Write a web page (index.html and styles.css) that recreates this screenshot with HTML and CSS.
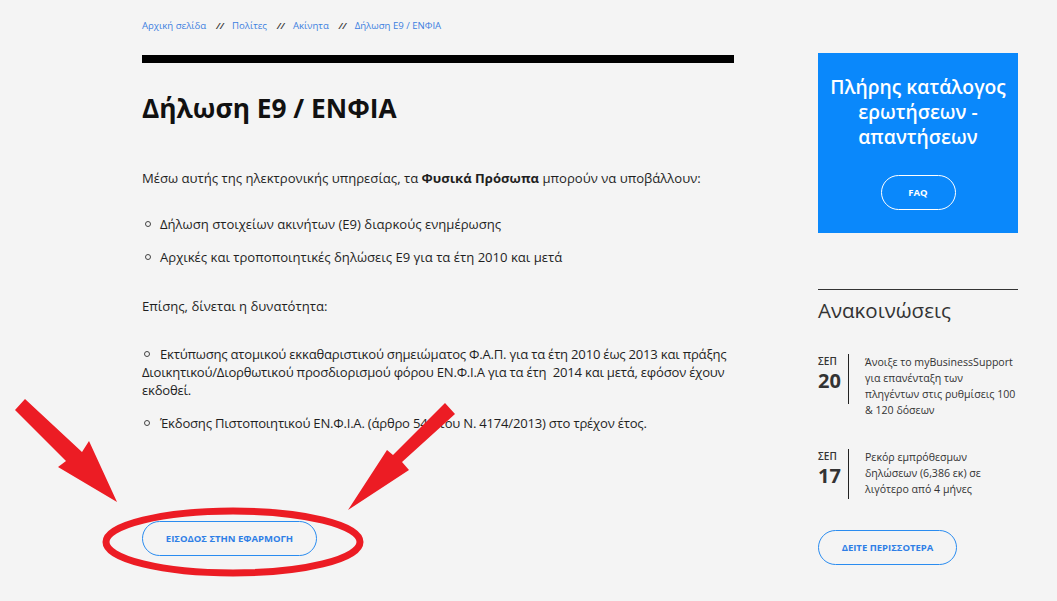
FILE: index.html
```html
<!DOCTYPE html>
<html lang="el">
<head>
<meta charset="UTF-8">
<title>Δήλωση Ε9 / ΕΝΦΙΑ</title>
<link rel="stylesheet" href="styles.css">
</head>
<body>
<div class="page">
    <div class="main">
        <div class="breadcrumb">
            <a href="#">Αρχική σελίδα</a><span class="sep">//</span>
            <a href="#">Πολίτες</a><span class="sep">//</span>
            <a href="#">Ακίνητα</a><span class="sep">//</span>
            <a href="#">Δήλωση Ε9 / ΕΝΦΙΑ</a>
        </div>
        <div class="bar"></div>
        <h1>Δήλωση Ε9 / ΕΝΦΙΑ</h1>
        <p class="intro">Μέσω αυτής της ηλεκτρονικής υπηρεσίας, τα <b>Φυσικά Πρόσωπα</b> μπορούν να υποβάλλουν:</p>
        <ul class="list">
            <li>Δήλωση στοιχείων ακινήτων (Ε9) διαρκούς ενημέρωσης</li>
            <li>Αρχικές και τροποποιητικές δηλώσεις Ε9 για τα έτη 2010 και μετά</li>
        </ul>
        <p class="intro">Επίσης, δίνεται η δυνατότητα:</p>
        <ul class="list inline">
            <li>Εκτύπωσης ατομικού εκκαθαριστικού σημειώματος Φ.Α.Π. για τα έτη 2010 έως 2013 και πράξης Διοικητικού/Διορθωτικού προσδιορισμού φόρου ΕΝ.Φ.Ι.Α για τα έτη &nbsp;2014 και μετά, εφόσον έχουν εκδοθεί.</li>
            <li>Έκδοσης Πιστοποιητικού ΕΝ.Φ.Ι.Α. (άρθρο 54Α του Ν. 4174/2013) στο τρέχον έτος.</li>
        </ul>
        <a href="#" class="btn">ΕΙΣΟΔΟΣ ΣΤΗΝ ΕΦΑΡΜΟΓΗ</a>
    </div>
    <div class="side">
        <div class="faq-box">
            <h2>Πλήρης κατάλογος ερωτήσεων - απαντήσεων</h2>
            <a href="#" class="btn btn-white">FAQ</a>
        </div>
        <div class="news">
            <h3>Ανακοινώσεις</h3>
            <div class="news-item">
                <div class="date"><span class="month">ΣΕΠ</span><span class="day">20</span></div>
                <p>Άνοιξε το myBusinessSupport για επανένταξη των πληγέντων στις ρυθμίσεις 100 &amp; 120 δόσεων</p>
            </div>
            <div class="news-item">
                <div class="date"><span class="month">ΣΕΠ</span><span class="day">17</span></div>
                <p>Ρεκόρ εμπρόθεσμων δηλώσεων (6,386 εκ) σε λιγότερο από 4 μήνες</p>
            </div>
            <a href="#" class="btn btn-more">ΔΕΙΤΕ ΠΕΡΙΣΣΟΤΕΡΑ</a>
        </div>
    </div>
</div>
<svg class="marks" width="1057" height="601" viewBox="0 0 1057 601">
    <polygon fill="#ec1c24" points="15,410 25,399 82,452 89,441 117,502 58,467 66,461"/>
    <polygon fill="#ec1c24" points="445,403 455,414 402,462 409,470 348,510 387,450 393,455"/>
    <ellipse cx="233" cy="542" rx="127" ry="31" fill="none" stroke="#ec1c24" stroke-width="7"/>
</svg>
</body>
</html>
```
FILE: styles.css
```css
body {
    margin: 0;
    background: #f4f4f4;
    font-family: "Open Sans", sans-serif;
    color: #1f1f1f;
}
.page {
    display: flex;
    padding-left: 142px;
    gap: 84px;
}
.main {
    width: 592px;
}
.breadcrumb {
    padding-top: 19px;
    height: 17px;
    font-size: 9.6px;
}
.breadcrumb a {
    color: #3c7fe0;
    text-decoration: none;
}
.breadcrumb .sep {
    color: #333;
    font-style: italic;
    font-weight: 600;
    margin: 0 6px 0 10px;
}
.bar {
    margin-top: 19px;
    height: 8px;
    background: #000;
}
h1 {
    margin: 27px 0 0;
    font-size: 26.3px;
    line-height: 36px;
    font-weight: 700;
    color: #111;
}
.intro {
    margin: 43px 0 0;
    font-size: 13.1px;
    line-height: 18px;
}
.list {
    margin: 28px 0 0;
    padding: 0 0 0 18px;
    list-style: none;
    font-size: 13.1px;
    line-height: 18px;
}
.list li {
    margin-bottom: 15px;
    position: relative;
}
.list li::before {
    content: "";
    position: absolute;
    left: -15px;
    top: 6px;
    width: 4px;
    height: 4px;
    border: 1.5px solid #444;
    border-radius: 50%;
}
.list.inline {
    padding-left: 0;
    margin-top: 30px;
    letter-spacing: -0.22px;
}
.list.inline li::before {
    position: static;
    display: inline-block;
    vertical-align: 2px;
    margin: 0 10px 0 2px;
}
.list + .intro {
    margin-top: 31px;
}
.btn {
    display: inline-block;
    box-sizing: border-box;
    border: 1px solid #2a8cf0;
    border-radius: 18px;
    color: #2f7fe6;
    font-size: 9.5px;
    font-weight: 700;
    text-decoration: none;
    line-height: 33px;
    text-align: center;
}
.main .btn {
    margin-top: 74px;
    width: 175px;
}
.side {
    width: 200px;
    padding-top: 53px;
}
.faq-box {
    background: #0a88fb;
    height: 180px;
    box-sizing: border-box;
    padding-top: 21px;
    text-align: center;
}
.faq-box h2 {
    margin: 0;
    color: #fff;
    font-size: 19.3px;
    font-weight: 600;
    line-height: 25px;
}
.btn-white {
    margin-top: 26px;
    width: 75px;
    border-color: #fff;
    color: #fff;
}
.news {
    margin-top: 56px;
    border-top: 1px solid #333;
}
.news h3 {
    margin: 6px 0 0;
    font-size: 20.5px;
    font-weight: 400;
    line-height: 28px;
    color: #333;
}
.news-item {
    display: flex;
    margin-top: 30px;
}
.news-item + .news-item {
    margin-top: 31px;
}
.date {
    flex-shrink: 0;
    width: 30px;
    display: flex;
    flex-direction: column;
    border-right: 1px solid #222;
    height: 50px;
    color: #333;
}
.month {
    font-size: 10px;
    font-weight: 600;
    line-height: 14px;
}
.day {
    font-size: 20px;
    font-weight: 700;
    line-height: 26px;
}
.news-item p {
    width: 152px;
    margin: 0 0 0 16px;
    font-size: 10.6px;
    line-height: 16px;
    color: #333;
}
.btn-more {
    margin-top: 31px;
    width: 139px;
}
.marks {
    position: absolute;
    left: 0;
    top: 0;
    pointer-events: none;
}
```
